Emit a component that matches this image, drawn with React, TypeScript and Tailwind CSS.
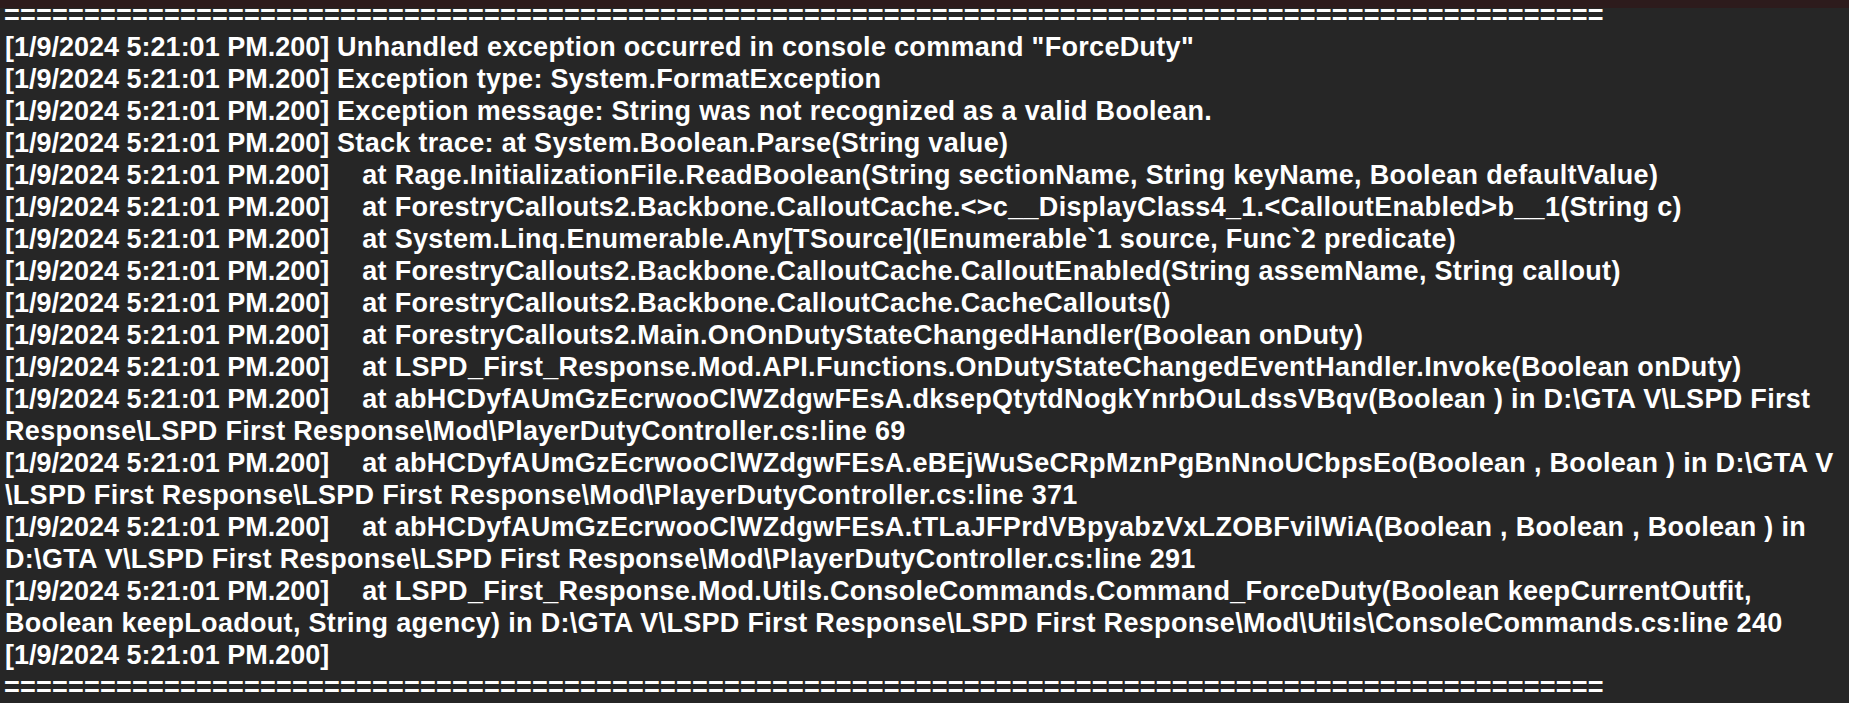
import React from 'react'

const stamp = "[1/9/2024 5:21:01 PM.200]";
const rule = "=".repeat(100);

// kind: "msg" = stamp + space, "at" = stamp + tab gap, "wrap" = continuation line, "rule" = separator
const lines: { kind: string; text: string }[] = [
  { kind: "rule", text: rule },
  { kind: "msg", text: 'Unhandled exception occurred in console command "ForceDuty"' },
  { kind: "msg", text: "Exception type: System.FormatException" },
  { kind: "msg", text: "Exception message: String was not recognized as a valid Boolean." },
  { kind: "msg", text: "Stack trace: at System.Boolean.Parse(String value)" },
  { kind: "at", text: "at Rage.InitializationFile.ReadBoolean(String sectionName, String keyName, Boolean defaultValue)" },
  { kind: "at", text: "at ForestryCallouts2.Backbone.CalloutCache.<>c__DisplayClass4_1.<CalloutEnabled>b__1(String c)" },
  { kind: "at", text: "at System.Linq.Enumerable.Any[TSource](IEnumerable`1 source, Func`2 predicate)" },
  { kind: "at", text: "at ForestryCallouts2.Backbone.CalloutCache.CalloutEnabled(String assemName, String callout)" },
  { kind: "at", text: "at ForestryCallouts2.Backbone.CalloutCache.CacheCallouts()" },
  { kind: "at", text: "at ForestryCallouts2.Main.OnOnDutyStateChangedHandler(Boolean onDuty)" },
  { kind: "at", text: "at LSPD_First_Response.Mod.API.Functions.OnDutyStateChangedEventHandler.Invoke(Boolean onDuty)" },
  { kind: "at", text: "at abHCDyfAUmGzEcrwooClWZdgwFEsA.dksepQtytdNogkYnrbOuLdssVBqv(Boolean ) in D:\\GTA V\\LSPD First" },
  { kind: "wrap", text: "Response\\LSPD First Response\\Mod\\PlayerDutyController.cs:line 69" },
  { kind: "at", text: "at abHCDyfAUmGzEcrwooClWZdgwFEsA.eBEjWuSeCRpMznPgBnNnoUCbpsEo(Boolean , Boolean ) in D:\\GTA V" },
  { kind: "wrap", text: "\\LSPD First Response\\LSPD First Response\\Mod\\PlayerDutyController.cs:line 371" },
  { kind: "at", text: "at abHCDyfAUmGzEcrwooClWZdgwFEsA.tTLaJFPrdVBpyabzVxLZOBFvilWiA(Boolean , Boolean , Boolean ) in" },
  { kind: "wrap", text: "D:\\GTA V\\LSPD First Response\\LSPD First Response\\Mod\\PlayerDutyController.cs:line 291" },
  { kind: "at", text: "at LSPD_First_Response.Mod.Utils.ConsoleCommands.Command_ForceDuty(Boolean keepCurrentOutfit," },
  { kind: "wrap", text: "Boolean keepLoadout, String agency) in D:\\GTA V\\LSPD First Response\\LSPD First Response\\Mod\\Utils\\ConsoleCommands.cs:line 240" },
  { kind: "msg", text: "" },
  { kind: "rule", text: rule },
];

const App: React.FC = () => {
  return (
    <div className="w-[1849px] h-[703px] overflow-hidden bg-[#262626] flex flex-col">
      {/* title strip */}
      <div className="h-[8px] shrink-0 bg-[#2d1b1c]" />
      <div
        className="-mt-[9px] pl-[5px] text-white font-bold text-[27px] leading-[32px]"
        style={{ fontFamily: '"Liberation Sans", Arial, sans-serif' }}
      >
        {lines.map((line, i) => (
          <div key={i} className="whitespace-pre">
            {line.kind === "rule" && <span className="tracking-[0.23px] -ml-[1px]">{line.text}</span>}
            {line.kind === "msg" && (
              <>
                {stamp}
                {line.text ? <span className="tracking-[0.31px]">{" " + line.text}</span> : null}
              </>
            )}
            {line.kind === "at" && (
              <>
                {stamp}
                <span className="ml-[33px] tracking-[0.31px]">{line.text}</span>
              </>
            )}
            {line.kind === "wrap" && <span className="tracking-[0.31px]">{line.text}</span>}
          </div>
        ))}
      </div>
    </div>
  )
}

export default App;
